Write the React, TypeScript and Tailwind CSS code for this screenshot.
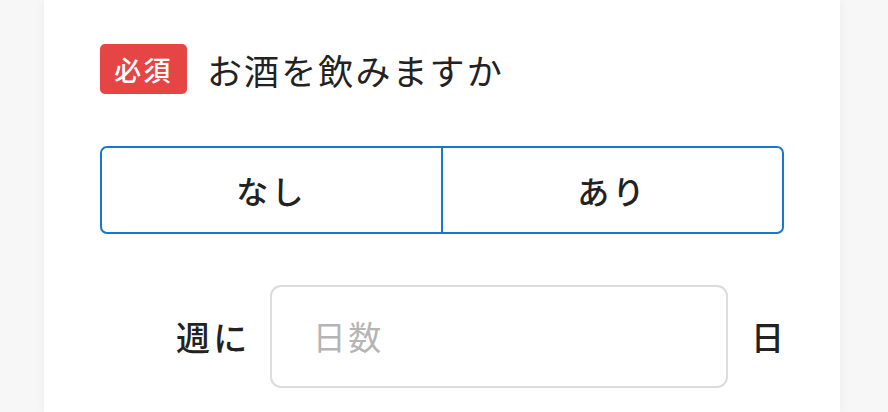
import React from "react";

export default function App() {
  return (
    <div
      className="w-[888px] h-[412px] bg-[#f7f7f7] overflow-hidden"
      style={{ fontFamily: '"Noto Sans CJK JP", "Noto Sans", sans-serif' }}
    >
      <div className="ml-[44px] w-[796px] h-[412px] bg-white shadow-[0_0_10px_rgba(0,0,0,0.06)] px-[56px] pt-[44px] text-[#222]">
        <div className="flex items-center gap-[20px]">
          <span className="h-[50px] w-[87px] flex items-center justify-center rounded-[5px] bg-[#e54545] text-white text-[27px] font-medium tracking-[0.08em] leading-none">
            必須
          </span>
          <span className="text-[35px] leading-none tracking-[0.06em]">お酒を飲みますか</span>
        </div>

        <div className="mt-[52px] flex h-[88px] rounded-[7px] border-2 border-[#1777cf] overflow-hidden">
          <button className="flex-1 flex items-center justify-center text-[32px] font-medium tracking-[0.1em] leading-none">
            なし
          </button>
          <div className="w-[2px] bg-[#1777cf]" />
          <button className="flex-1 flex items-center justify-center text-[32px] font-medium tracking-[0.1em] leading-none">
            あり
          </button>
        </div>

        <div className="mt-[51px] flex items-center">
          <div className="w-[151px] text-right text-[34px] font-medium tracking-[0.1em] leading-none">週に</div>
          <div className="ml-[19px] w-[459px] h-[103px] rounded-[11px] border-2 border-[#dcdcdc] flex items-center pl-[41px] text-[33px] text-[#b5b5b5] tracking-[0.08em] leading-none">
            日数
          </div>
          <div className="ml-[23px] text-[33px] font-medium leading-none">日</div>
        </div>
      </div>
    </div>
  );
}
